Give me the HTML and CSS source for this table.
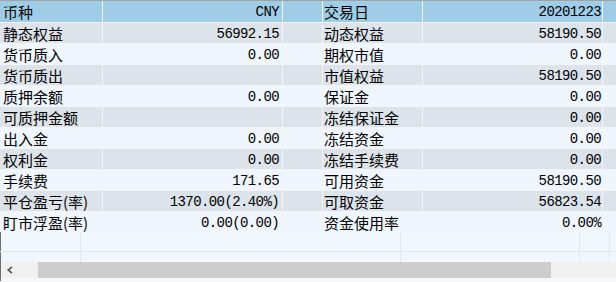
FILE: index.html
```html
<!DOCTYPE html>
<html lang="zh-CN">
<head>
<meta charset="utf-8">
<title>资金</title>
<link rel="stylesheet" href="styles.css">
</head>
<body>
<div class="panel">
  <div class="grid">
    <div class="row head"><div class="c l1">币种</div><div class="c v1">CNY</div><div class="c gap"></div><div class="c l2">交易日</div><div class="c v2">20201223</div><div class="c rest"></div></div>
    <div class="row dark"><div class="c l1">静态权益</div><div class="c v1">56992.15</div><div class="c gap"></div><div class="c l2">动态权益</div><div class="c v2">58190.50</div><div class="c rest"></div></div>
    <div class="row light"><div class="c l1">货币质入</div><div class="c v1">0.00</div><div class="c gap"></div><div class="c l2">期权市值</div><div class="c v2">0.00</div><div class="c rest"></div></div>
    <div class="row dark"><div class="c l1">货币质出</div><div class="c v1"></div><div class="c gap"></div><div class="c l2">市值权益</div><div class="c v2">58190.50</div><div class="c rest"></div></div>
    <div class="row light"><div class="c l1">质押余额</div><div class="c v1">0.00</div><div class="c gap"></div><div class="c l2">保证金</div><div class="c v2">0.00</div><div class="c rest"></div></div>
    <div class="row dark"><div class="c l1">可质押金额</div><div class="c v1"></div><div class="c gap"></div><div class="c l2">冻结保证金</div><div class="c v2">0.00</div><div class="c rest"></div></div>
    <div class="row light"><div class="c l1">出入金</div><div class="c v1">0.00</div><div class="c gap"></div><div class="c l2">冻结资金</div><div class="c v2">0.00</div><div class="c rest"></div></div>
    <div class="row dark"><div class="c l1">权利金</div><div class="c v1">0.00</div><div class="c gap"></div><div class="c l2">冻结手续费</div><div class="c v2">0.00</div><div class="c rest"></div></div>
    <div class="row light"><div class="c l1">手续费</div><div class="c v1">171.65</div><div class="c gap"></div><div class="c l2">可用资金</div><div class="c v2">58190.50</div><div class="c rest"></div></div>
    <div class="row dark"><div class="c l1">平仓盈亏(率)</div><div class="c v1">1370.00(2.40%)</div><div class="c gap"></div><div class="c l2">可取资金</div><div class="c v2">56823.54</div><div class="c rest"></div></div>
    <div class="row light last"><div class="c l1">盯市浮盈(率)</div><div class="c v1">0.00(0.00)</div><div class="c gap"></div><div class="c l2">资金使用率</div><div class="c v2">0.00%</div><div class="c rest"></div></div>
  </div>
  <div class="empty">
    <div class="e e1"></div><div class="e e2"></div><div class="e e3"></div><div class="e e4"></div><div class="e e5"></div>
    <div class="e e1 b"></div><div class="e e2 b"></div><div class="e e3 b"></div><div class="e e4 b"></div><div class="e e5 b"></div>
  </div>
  <div class="hscroll">
    <div class="arrow"><svg width="8" height="8" viewBox="0 0 8 8"><polyline points="6,0.8 2.2,4 6,7.2" fill="none" stroke="#5a5a5a" stroke-width="1.7"/></svg></div>
    <div class="thumb"></div>
    <div class="track"></div>
  </div>
  <div class="foot"></div>
</div>
</body>
</html>
```
FILE: styles.css
```css
html, body {
  margin: 0;
  padding: 0;
  background: #f0f7ff;
}
.panel {
  width: 616px;
  height: 282px;
  overflow: hidden;
  display: flex;
  flex-direction: column;
  font-family: "Noto Sans CJK SC", "Noto Sans", sans-serif;
  font-size: 15px;
  color: #000;
}
.grid {
  border-top: 1px solid #a3a3a3;
  display: flex;
  flex-direction: column;
}
.row {
  display: flex;
  height: 21px;
  box-sizing: border-box;
  border-bottom: 1px solid #f2f4f6;
}
.row.head {
  height: 22px;
  background: #9fcde8;
}
.row.dark { background: #dce3ea; }
.row.light { background: #eff6fe; }
.row.last { border-bottom: none; height: 20px; }
.c {
  box-sizing: border-box;
  border-right: 1px solid #f2f4f6;
  display: flex;
  align-items: center;
  white-space: nowrap;
  line-height: 1;
}
.l1 { width: 103px; padding-left: 3px; }
.v1 {
  width: 180px;
  padding-right: 3px;
  justify-content: flex-end;
}
.gap { width: 40px; }
.l2 { width: 100px; padding-left: 1px; }
.v2 {
  width: 180px;
  padding-right: 1px;
  justify-content: flex-end;
}
.v1, .v2 {
  font-family: "Liberation Mono", "DejaVu Sans Mono", monospace;
  font-size: 14px;
  letter-spacing: -0.6px;
  padding-top: 1px;
}
.rest { flex: 1; border-right: none; }
.empty {
  height: 30px;
  display: grid;
  grid-template-columns: 80px 320px 179px 30px 1fr;
  grid-template-rows: 20px 10px;
  border-left: 1px solid #6e6e6e;
  background: #f0f7ff;
}
.e {
  box-sizing: border-box;
  border-right: 1px solid #e4e8ec;
  border-bottom: 1px solid #e4e8ec;
}
.e.b { border-bottom: none; }
.e1 { margin-left: -1px; }
.e5 { border-right: none; }
.hscroll {
  height: 16px;
  display: flex;
  background: #f0f0f0;
  border-left: 1px solid #6e6e6e;
}
.arrow {
  width: 37px;
  display: flex;
  align-items: center;
  padding-left: 5px;
  box-sizing: border-box;
}
.thumb {
  width: 513px;
  background: #cdcdcd;
}
.track { flex: 1; }
.foot {
  height: 3px;
  background: #f8f8f8;
  border-left: 1px solid #6e6e6e;
}
```
